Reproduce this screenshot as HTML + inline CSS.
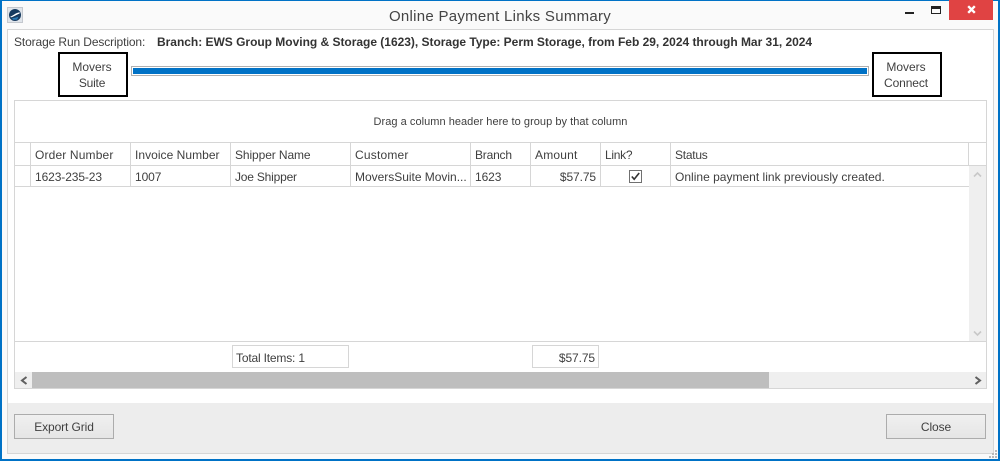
<!DOCTYPE html>
<html><head><meta charset="utf-8">
<style>
html,body{margin:0;padding:0;width:1000px;height:461px;overflow:hidden;background:#fff}
body{position:relative;font-family:"Liberation Sans",sans-serif;font-size:12px;color:#3f3f3f}
div{position:absolute;box-sizing:border-box}
.t{white-space:nowrap;line-height:16px;height:16px}
.l{background:#d6d6d6}
</style></head><body>
<div style="left:0;top:0;width:1000px;height:461px;background:#fafafa"></div>
<div style="left:7px;top:29px;width:987px;height:425px;background:#fff;border:1px solid #d6d6d6"></div>
<div style="left:8px;top:403px;width:985px;height:50px;background:#ededed"></div>

<!-- window frame -->
<div style="left:0;top:0;width:1000px;height:1px;background:#0072c6"></div>
<div style="left:0;top:0;width:2px;height:461px;background:#0072c6"></div>
<div style="left:998px;top:0;width:2px;height:461px;background:#0072c6"></div>
<div style="left:0;top:459px;width:1000px;height:2px;background:#0072c6"></div>

<!-- app icon -->
<svg style="position:absolute;left:7px;top:7px" width="16" height="16" viewBox="0 0 16 16">
<rect x="0.5" y="0.5" width="15" height="15" fill="#dfe4ea" stroke="#c4c8ce"/>
<circle cx="8" cy="8" r="6" fill="#163a5f"/>
<path d="M3.2 9.6C6 8.8 8 6 12.8 5.2L12.4 6.8C9.5 7.4 7.5 9.6 4 10.4Z" fill="#fff"/>
<path d="M5 11.2C7 11 9 10.6 11.5 9.6L10 12.8H6Z" fill="#2a7ab5"/>
</svg>

<div class="t" style="left:0;top:8px;width:1000px;text-align:center;font-size:15px;line-height:18px;height:18px;color:#444;letter-spacing:.28px">Online Payment Links Summary</div>

<!-- window buttons -->
<div style="left:905px;top:12px;width:9px;height:2px;background:#222"></div>
<div style="left:931px;top:6px;width:10px;height:8px;border:1px solid #222;border-top-width:3px"></div>
<div style="left:949px;top:0;width:44px;height:20px;background:#e04343"></div>
<svg style="position:absolute;left:967px;top:5px" width="9" height="9" viewBox="0 0 9 9"><path d="M1.2 1.2L7.8 7.8M7.8 1.2L1.2 7.8" stroke="#fff" stroke-width="2.4"/></svg>

<!-- description -->
<div class="t" style="left:14px;top:34px;letter-spacing:-.12px">Storage Run Description:</div>
<div class="t" style="left:157px;top:34px;font-weight:bold;letter-spacing:-.02px;color:#333">Branch: EWS Group Moving &amp; Storage (1623), Storage Type: Perm Storage, from Feb 29, 2024 through Mar 31, 2024</div>

<!-- movers boxes -->
<div style="left:58px;top:52px;width:70px;height:45px;border:2px solid #000;background:#fff"></div>
<div class="t" style="left:57px;top:59px;width:70px;text-align:center">Movers</div>
<div class="t" style="left:57px;top:75px;width:70px;text-align:center;letter-spacing:-.2px">Suite</div>
<div style="left:872px;top:52px;width:70px;height:45px;border:2px solid #000;background:#fff"></div>
<div class="t" style="left:872px;top:59px;width:68px;text-align:center">Movers</div>
<div class="t" style="left:872px;top:75px;width:68px;text-align:center;letter-spacing:-.1px">Connect</div>

<!-- progress -->
<div style="left:131px;top:66px;width:738px;height:10px;background:#fff;border:1px solid #b0b0b0"></div>
<div style="left:133px;top:68px;width:734px;height:6px;background:#0072c6"></div>

<!-- grid -->
<div style="left:14px;top:100px;width:973px;height:289px;background:#fff;border:1px solid #d6d6d6"></div>
<div class="t" style="left:15px;top:114px;width:971px;text-align:center;font-size:11px;letter-spacing:.04px">Drag a column header here to group by that column</div>

<div class="l" style="left:15px;top:142px;width:971px;height:1px"></div>
<div class="l" style="left:15px;top:165px;width:971px;height:1px"></div>
<div class="l" style="left:15px;top:186px;width:955px;height:1px"></div>
<div class="l" style="left:15px;top:341px;width:971px;height:1px"></div>

<div class="l" style="left:30px;top:142px;width:1px;height:45px"></div>
<div class="l" style="left:130px;top:142px;width:1px;height:45px"></div>
<div class="l" style="left:230px;top:142px;width:1px;height:45px"></div>
<div class="l" style="left:350px;top:142px;width:1px;height:45px"></div>
<div class="l" style="left:470px;top:142px;width:1px;height:45px"></div>
<div class="l" style="left:530px;top:142px;width:1px;height:45px"></div>
<div class="l" style="left:600px;top:142px;width:1px;height:45px"></div>
<div class="l" style="left:670px;top:142px;width:1px;height:45px"></div>
<div class="l" style="left:968px;top:142px;width:1px;height:24px"></div>

<div class="t" style="left:35px;top:147px;letter-spacing:.15px">Order Number</div>
<div class="t" style="left:135px;top:147px;letter-spacing:.04px">Invoice Number</div>
<div class="t" style="left:235px;top:147px;letter-spacing:-.1px">Shipper Name</div>
<div class="t" style="left:355px;top:147px;letter-spacing:.2px">Customer</div>
<div class="t" style="left:475px;top:147px;letter-spacing:-.2px">Branch</div>
<div class="t" style="left:535px;top:147px;letter-spacing:.2px">Amount</div>
<div class="t" style="left:605px;top:147px;letter-spacing:-.3px">Link?</div>
<div class="t" style="left:675px;top:147px;letter-spacing:-.25px">Status</div>

<div class="t" style="left:35px;top:169px;letter-spacing:-.1px">1623-235-23</div>
<div class="t" style="left:135px;top:169px;letter-spacing:-.1px">1007</div>
<div class="t" style="left:235px;top:169px;letter-spacing:-.2px">Joe Shipper</div>
<div class="t" style="left:355px;top:169px;letter-spacing:-.02px">MoversSuite Movin...</div>
<div class="t" style="left:475px;top:169px;letter-spacing:-.1px">1623</div>
<div class="t" style="left:531px;top:169px;width:65px;text-align:right;letter-spacing:-.1px">$57.75</div>
<svg style="position:absolute;left:629px;top:170px" width="13" height="13" viewBox="0 0 13 13">
<rect x=".5" y=".5" width="12" height="12" fill="#fff" stroke="#707070"/>
<path d="M2.8 6.5L5.2 9.2L10.2 3" fill="none" stroke="#333" stroke-width="1.6"/>
</svg>
<div class="t" style="left:675px;top:169px;letter-spacing:.01px">Online payment link previously created.</div>

<!-- vertical scrollbar -->
<div style="left:969px;top:166px;width:17px;height:175px;background:#efefef"></div>
<svg style="position:absolute;left:973px;top:171px" width="9" height="7" viewBox="0 0 9 7"><path d="M1 5.5L4.5 2L8 5.5" fill="none" stroke="#c8c8c8" stroke-width="1.6"/></svg>
<svg style="position:absolute;left:973px;top:330px" width="9" height="7" viewBox="0 0 9 7"><path d="M1 1.5L4.5 5L8 1.5" fill="none" stroke="#c8c8c8" stroke-width="1.6"/></svg>

<!-- totals -->
<div style="left:232px;top:345px;width:117px;height:23px;border:1px solid #d6d6d6"></div>
<div class="t" style="left:236px;top:350px;letter-spacing:-.18px">Total Items: 1</div>
<div style="left:532px;top:345px;width:67px;height:23px;border:1px solid #d6d6d6"></div>
<div class="t" style="left:533px;top:350px;width:62px;text-align:right;letter-spacing:-.1px">$57.75</div>

<!-- horizontal scrollbar -->
<div style="left:15px;top:372px;width:971px;height:16px;background:#efefef"></div>
<div style="left:32px;top:372px;width:737px;height:16px;background:#bebebe"></div>
<svg style="position:absolute;left:20px;top:376px" width="8" height="9" viewBox="0 0 8 9"><path d="M6.5 1L2 4.5L6.5 8" fill="none" stroke="#606060" stroke-width="2"/></svg>
<svg style="position:absolute;left:974px;top:376px" width="8" height="9" viewBox="0 0 8 9"><path d="M1.5 1L6 4.5L1.5 8" fill="none" stroke="#606060" stroke-width="2"/></svg>

<!-- footer buttons -->
<div style="left:14px;top:414px;width:100px;height:25px;border:1px solid #acacac;background:linear-gradient(#f0f0f0,#e5e5e5)"></div>
<div class="t" style="left:14px;top:419px;width:100px;text-align:center;letter-spacing:-.1px">Export Grid</div>
<div style="left:886px;top:414px;width:100px;height:25px;border:1px solid #acacac;background:linear-gradient(#f0f0f0,#e5e5e5)"></div>
<div class="t" style="left:886px;top:419px;width:100px;text-align:center;letter-spacing:-.1px">Close</div>

<!-- resize grip -->
<svg style="position:absolute;left:989px;top:450px" width="9" height="9" viewBox="0 0 9 9" fill="#b8b8b8">
<rect x="6" y="0" width="2" height="2"/><rect x="3" y="3" width="2" height="2"/><rect x="6" y="3" width="2" height="2"/><rect x="0" y="6" width="2" height="2"/><rect x="3" y="6" width="2" height="2"/><rect x="6" y="6" width="2" height="2"/>
</svg>
</body></html>
